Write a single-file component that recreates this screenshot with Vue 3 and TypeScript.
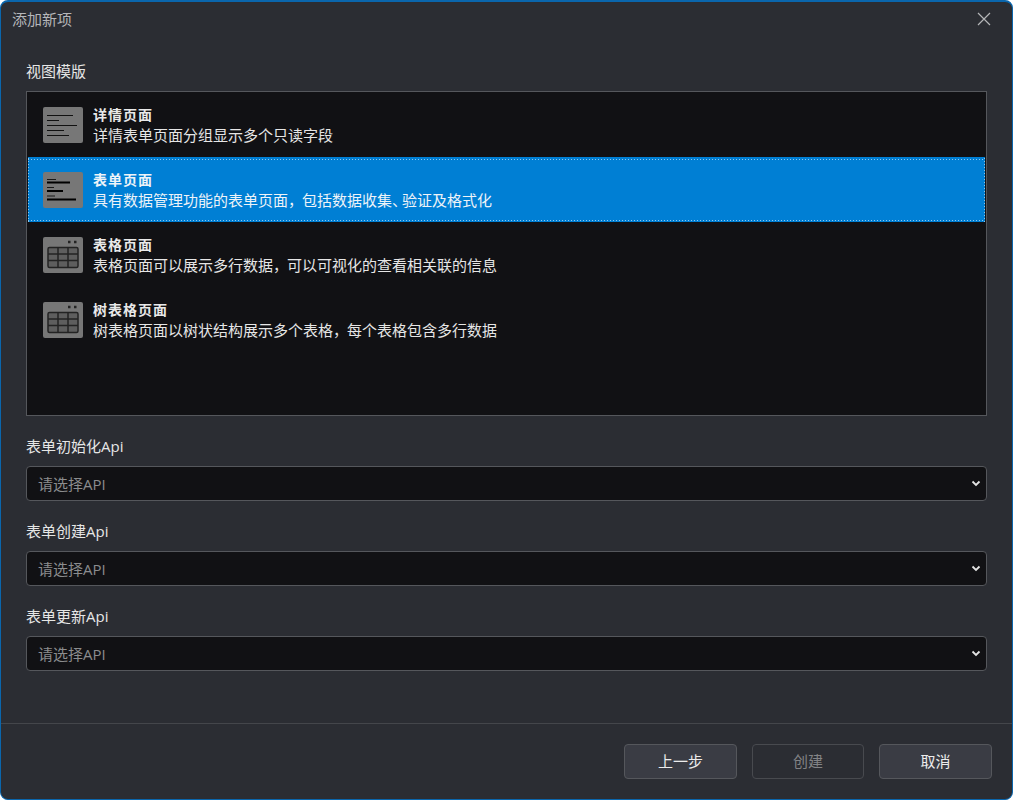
<script setup lang="ts">
interface Tpl { title: string; desc: string; kind: 'detail' | 'form' | 'table'; selected?: boolean }
const templates: Tpl[] = [
  { title: '详情页面', desc: '详情表单页面分组显示多个只读字段', kind: 'detail' },
  { title: '表单页面', desc: '具有数据管理功能的表单页面，包括数据收集、验证及格式化', kind: 'form', selected: true },
  { title: '表格页面', desc: '表格页面可以展示多行数据，可以可视化的查看相关联的信息', kind: 'table' },
  { title: '树表格页面', desc: '树表格页面以树状结构展示多个表格，每个表格包含多行数据', kind: 'table' },
]
const apis = ['表单初始化Api', '表单创建Api', '表单更新Api']
const segments = (s: string): string[] => s.split(/([，、])/)
const punctClass = (p: string) => (p === '，' ? 'comma' : p === '、' ? 'pause' : '')
</script>

<template>
  <div class="dialog">
    <header class="head">
      <span class="head-title">添加新项</span>
      <svg class="close" width="14" height="14" viewBox="0 0 14 14"><path d="M1 1l12 12M13 1L1 13" stroke="#b4b5b8" stroke-width="1.2" fill="none" /></svg>
    </header>
    <main class="body">
      <div class="label first">视图模版</div>
      <div class="list">
        <div v-for="t in templates" :key="t.title" class="item" :class="{ selected: t.selected }">
          <svg class="icon" width="40" height="36" viewBox="0 0 40 36">
            <rect x="0" y="0" width="40" height="36" rx="2" fill="#777777" />
            <g v-if="t.kind === 'detail'" stroke="#111111" stroke-width="1" fill="none">
              <path d="M4 8.500h26M4 13.500h12M4 18.500h30M4 23.500h17M4 28.500h22" />
            </g>
            <g v-else-if="t.kind === 'form'" stroke="#000000" fill="none">
              <path d="M4 7.500h9" stroke-width="1" stroke-opacity="0.8" />
              <path d="M4 10.500h23" stroke-width="2" />
              <path d="M4 15.500h7" stroke-width="1" stroke-opacity="0.8" />
              <path d="M4 19h16" stroke-width="2" />
              <path d="M4 24h8" stroke-width="1" stroke-opacity="0.8" />
              <path d="M4 27.500h29" stroke-width="2" />
            </g>
            <g v-else stroke="#232323" fill="none">
              <rect x="5" y="10.500" width="30" height="20" rx="1.500" fill="#232323" fill-opacity="0.3" stroke-width="1.500" />
              <path d="M5 17h30M5 23.500h30M15 10.500v20M25 10.500v20" stroke-width="1.500" />
              <path d="M25 5h2.500M31 5h2.500" stroke-width="2.500" />
            </g>
          </svg>
          <div class="item-text">
            <div class="item-title">{{ t.title }}</div>
            <div class="item-desc"><span v-for="(p, i) in segments(t.desc)" :key="i" :class="punctClass(p)">{{ p }}</span></div>
          </div>
        </div>
      </div>
      <div v-for="a in apis" :key="a" class="field">
        <div class="label">{{ a }}</div>
        <div class="select">
          <span class="placeholder">请选择API</span>
          <svg width="10" height="7" viewBox="0 0 10 7"><path d="M1.500 1.500L5 5l3.500-3.500" stroke="#e4e4e4" stroke-width="1.800" fill="none" /></svg>
        </div>
      </div>
    </main>
    <footer class="foot">
      <button class="btn prev">上一步</button>
      <button class="btn disabled">创建</button>
      <button class="btn cancel">取消</button>
    </footer>
  </div>
</template>

<style scoped>
.dialog {
  width: 1013px;
  height: 800px;
  box-sizing: border-box;
  display: flex;
  flex-direction: column;
  background: #2b2d33;
  border: 1px solid #0a66ad;
  border-top-width: 2px;
  border-radius: 8px;
  font-family: "Open Sans", "Noto Sans CJK SC", sans-serif;
  font-size: 15px;
  color: #e6e6e6;
  overflow: hidden;
}
.head {
  height: 34px;
  flex: none;
  display: flex;
  align-items: center;
  justify-content: space-between;
  padding: 0 21px 0 11px;
}
.head-title { color: #b5b6b9; line-height: 20px; }
.close { flex: none; }
.body {
  flex: 1;
  min-height: 0;
  padding: 0 25px;
}
.label {
  height: 20px;
  line-height: 20px;
  margin-bottom: 10px;
}
.label.first { margin-top: 25px; margin-bottom: 10px; }
.list {
  box-sizing: border-box;
  height: 325px;
  background: #111114;
  border: 1px solid #55575c;
  padding: 0 1px;
  margin-bottom: 20px;
}
.item {
  height: 65px;
  box-sizing: border-box;
  display: flex;
  align-items: center;
  padding: 1px 0 0 15px;
  gap: 10px;
}
.item.selected {
  background:
    repeating-linear-gradient(90deg, #8fc6ea 0 1px, transparent 1px 3px) 0 2px / 100% 1px no-repeat,
    repeating-linear-gradient(90deg, #8fc6ea 0 1px, transparent 1px 3px) 0 63px / 100% 1px no-repeat,
    repeating-linear-gradient(0deg, #8fc6ea 0 1px, transparent 1px 3px) 0 0 / 1px 100% no-repeat,
    repeating-linear-gradient(0deg, #8fc6ea 0 1px, transparent 1px 3px) 100% 0 / 1px 100% no-repeat,
    #007fd4;
}
.icon { flex: none; }
.item-text { line-height: 20px; margin-top: -1px; color: #e9e9e9; }
.item-title { font-size: 14px; font-weight: 700; letter-spacing: 1px; }
.item-desc { color: #e6e6e6; }
.comma { letter-spacing: -1px; }
.pause { letter-spacing: -5px; }
.selected .item-title, .selected .item-desc { color: #eef3f8; }
.field { margin-bottom: 20px; }
.select {
  box-sizing: border-box;
  height: 35px;
  background: #111114;
  border: 1px solid #55575c;
  border-radius: 4px;
  display: flex;
  align-items: center;
  justify-content: space-between;
  padding: 0 5px 0 11px;
}
.placeholder { color: #8b8c8e; }
.foot {
  height: 76px;
  flex: none;
  box-sizing: border-box;
  border-top: 1px solid #44464b;
  display: flex;
  justify-content: flex-end;
  align-items: flex-start;
  gap: 15px;
  padding: 20px 20px 0 0;
}
.btn {
  box-sizing: border-box;
  height: 35px;
  width: 113px;
  border: 1px solid #55575c;
  border-radius: 4px;
  background: #3a3c44;
  color: #ececec;
  font: inherit;
  padding: 0 0 2px;
}
.btn.disabled {
  width: 112px;
  background: #2b2d33;
  color: #828386;
  border-color: #484a4f;
}
</style>
